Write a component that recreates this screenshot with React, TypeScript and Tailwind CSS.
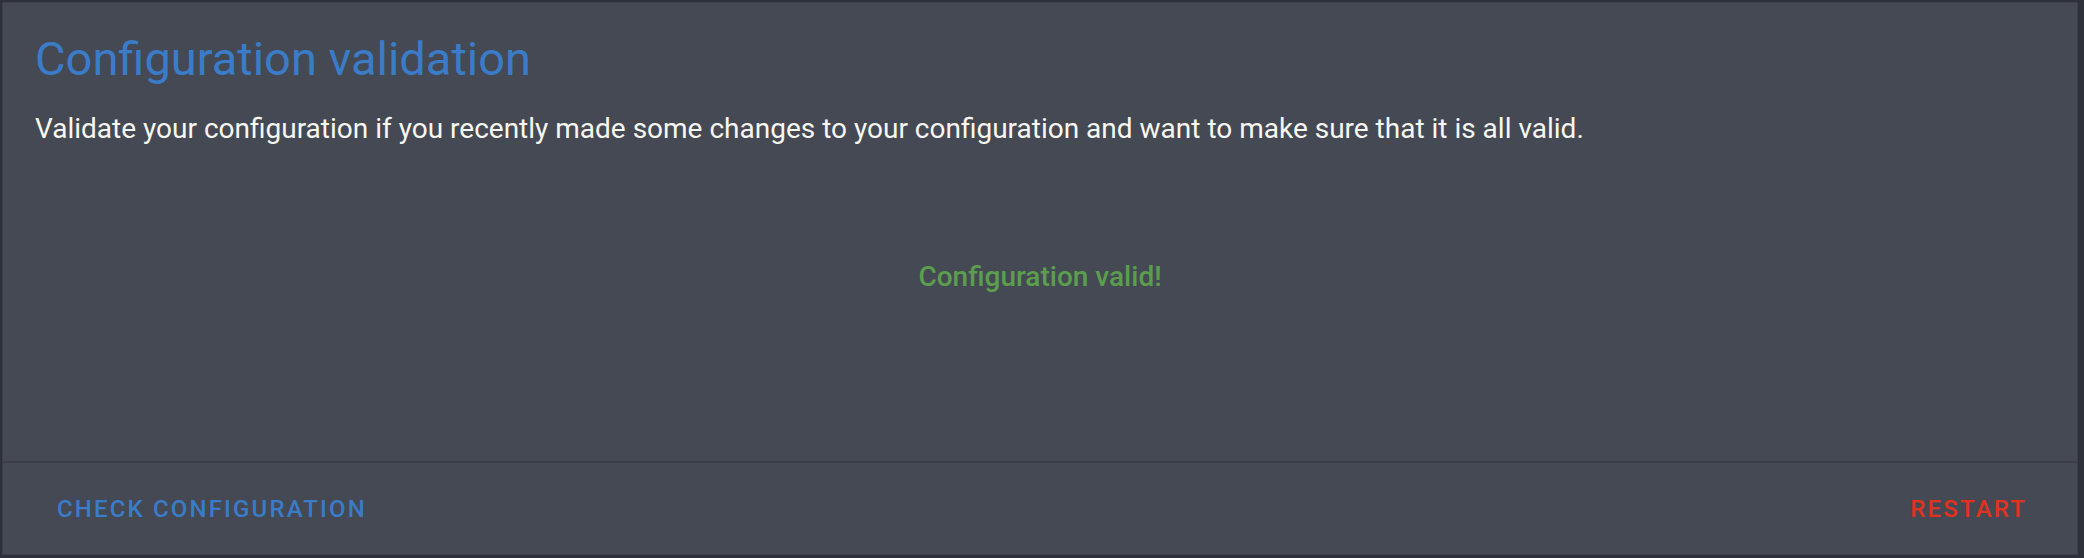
export default function App() {
  return (
    <div
      className="w-[2084px] h-[558px] bg-[#2e313a] pl-[2px] pt-[2px] pr-[6px] pb-[3px]"
      style={{ fontFamily: "Roboto, 'Noto Sans', sans-serif" }}
    >
      <div className="h-full flex flex-col bg-[#454953] border border-[#3d414b]">
        {/* header + body */}
        <div className="flex-1 flex flex-col px-[32px]">
          <h1 className="mt-[20px] text-[47px] leading-[72px] font-normal text-[#3a7cc8]">
            Configuration validation
          </h1>
          <p className="mt-[14px] text-[28px] leading-[40px] text-[#f7f7f2]">
            Validate your configuration if you recently made some changes to your configuration and want to make sure that it is all valid.
          </p>
          <div className="mt-[110px] text-center text-[28px] leading-[36px] font-medium text-[#5a9e4e]">
            Configuration valid!
          </div>
        </div>
        {/* footer actions */}
        <div className="h-[93px] flex items-center justify-between border-t-2 border-[#3b3e48] pl-[54px] pr-[50px]">
          <button className="text-[24px] font-medium tracking-[0.09em] uppercase text-[#3a7cc8]">
            Check configuration
          </button>
          <button className="text-[24px] font-medium tracking-[0.09em] uppercase text-[#e1321f]">
            Restart
          </button>
        </div>
      </div>
    </div>
  );
}
